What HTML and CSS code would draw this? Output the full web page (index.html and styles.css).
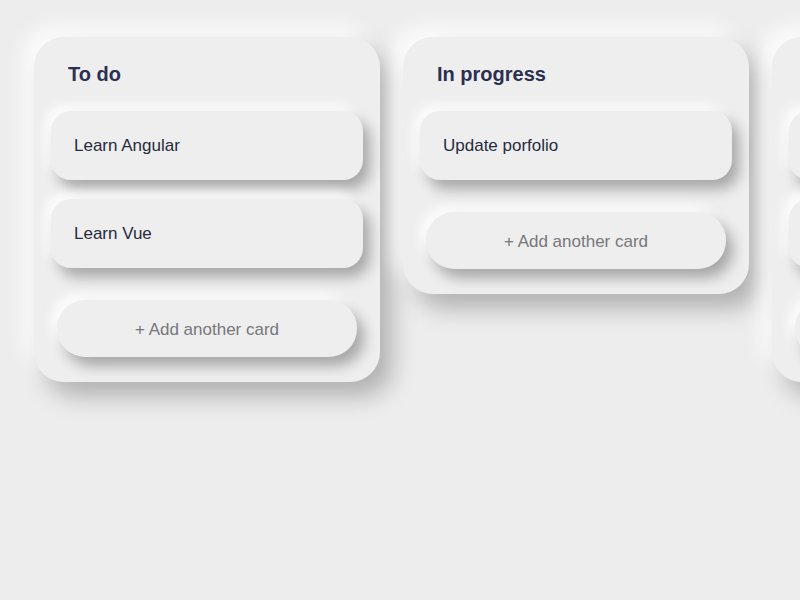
FILE: index.html
```html
<!DOCTYPE html>
<html lang="en">
  <head>
    <meta charset="UTF-8" />
    <meta name="viewport" content="width=device-width, initial-scale=1.0" />
    <title>Neumorphic Board</title>
    <link rel="stylesheet" href="styles.css">
  </head>
  <body>
    <main class="board">
      <section class="column">
        <h2>To do</h2>
        <div class="cards">
          <div class="card">Learn Angular</div>
          <div class="card">Learn Vue</div>
        </div>
        <button class="add">+ Add another card</button>
      </section>

      <section class="column">
        <h2>In progress</h2>
        <div class="cards">
          <div class="card">Update porfolio</div>
        </div>
        <button class="add">+ Add another card</button>
      </section>

      <!-- third column only peeks in at the edge -->
      <section class="column" aria-hidden="true">
        <h2>&nbsp;</h2>
        <div class="cards">
          <div class="card"></div>
          <div class="card"></div>
        </div>
        <button class="add"></button>
      </section>
    </main>
  </body>
</html>
```

FILE: styles.css
```css
/* Reset */
* {
  margin: 0;
  padding: 0;
  box-sizing: border-box;
}

body {
  font-family: "Liberation Sans", Arial, sans-serif;
  background: #ededed;
  overflow: hidden;
  height: 100vh;
}

.board {
  display: flex;
  align-items: flex-start;
  gap: 23px;
  padding: 37px 0 0 34px;
}

/* Column */
.column {
  flex: 0 0 346px;
  background: #eeeeee;
  border-radius: 30px;
  padding: 25px 17px 25px;
  box-shadow: 12px 14px 24px rgba(0, 0, 0, 0.26),
    -10px -10px 20px rgba(255, 255, 255, 0.9);
}

.column h2 {
  font-size: 20px;
  line-height: 24px;
  font-weight: 700;
  color: #2b3050;
  padding-left: 17px;
  margin-bottom: 25px;
}

.cards {
  display: flex;
  flex-direction: column;
  gap: 19px;
}

.card {
  height: 69px;
  display: flex;
  align-items: center;
  padding: 1px 23px 0;
  font-size: 17px;
  color: #262b40;
  background: #eeeeee;
  border-radius: 20px;
  box-shadow: 7px 9px 14px rgba(0, 0, 0, 0.3),
    -6px -6px 12px rgba(255, 255, 255, 0.9);
}

/* Add button */
.add {
  display: block;
  width: calc(100% - 12px);
  height: 57px;
  margin: 32px 6px 0;
  padding-top: 2px;
  border: none;
  border-radius: 28px;
  background: #eeeeee;
  font-family: inherit;
  font-size: 17px;
  color: #77777c;
  cursor: pointer;
  box-shadow: 7px 9px 14px rgba(0, 0, 0, 0.3),
    -6px -6px 12px rgba(255, 255, 255, 0.9);
}
```
